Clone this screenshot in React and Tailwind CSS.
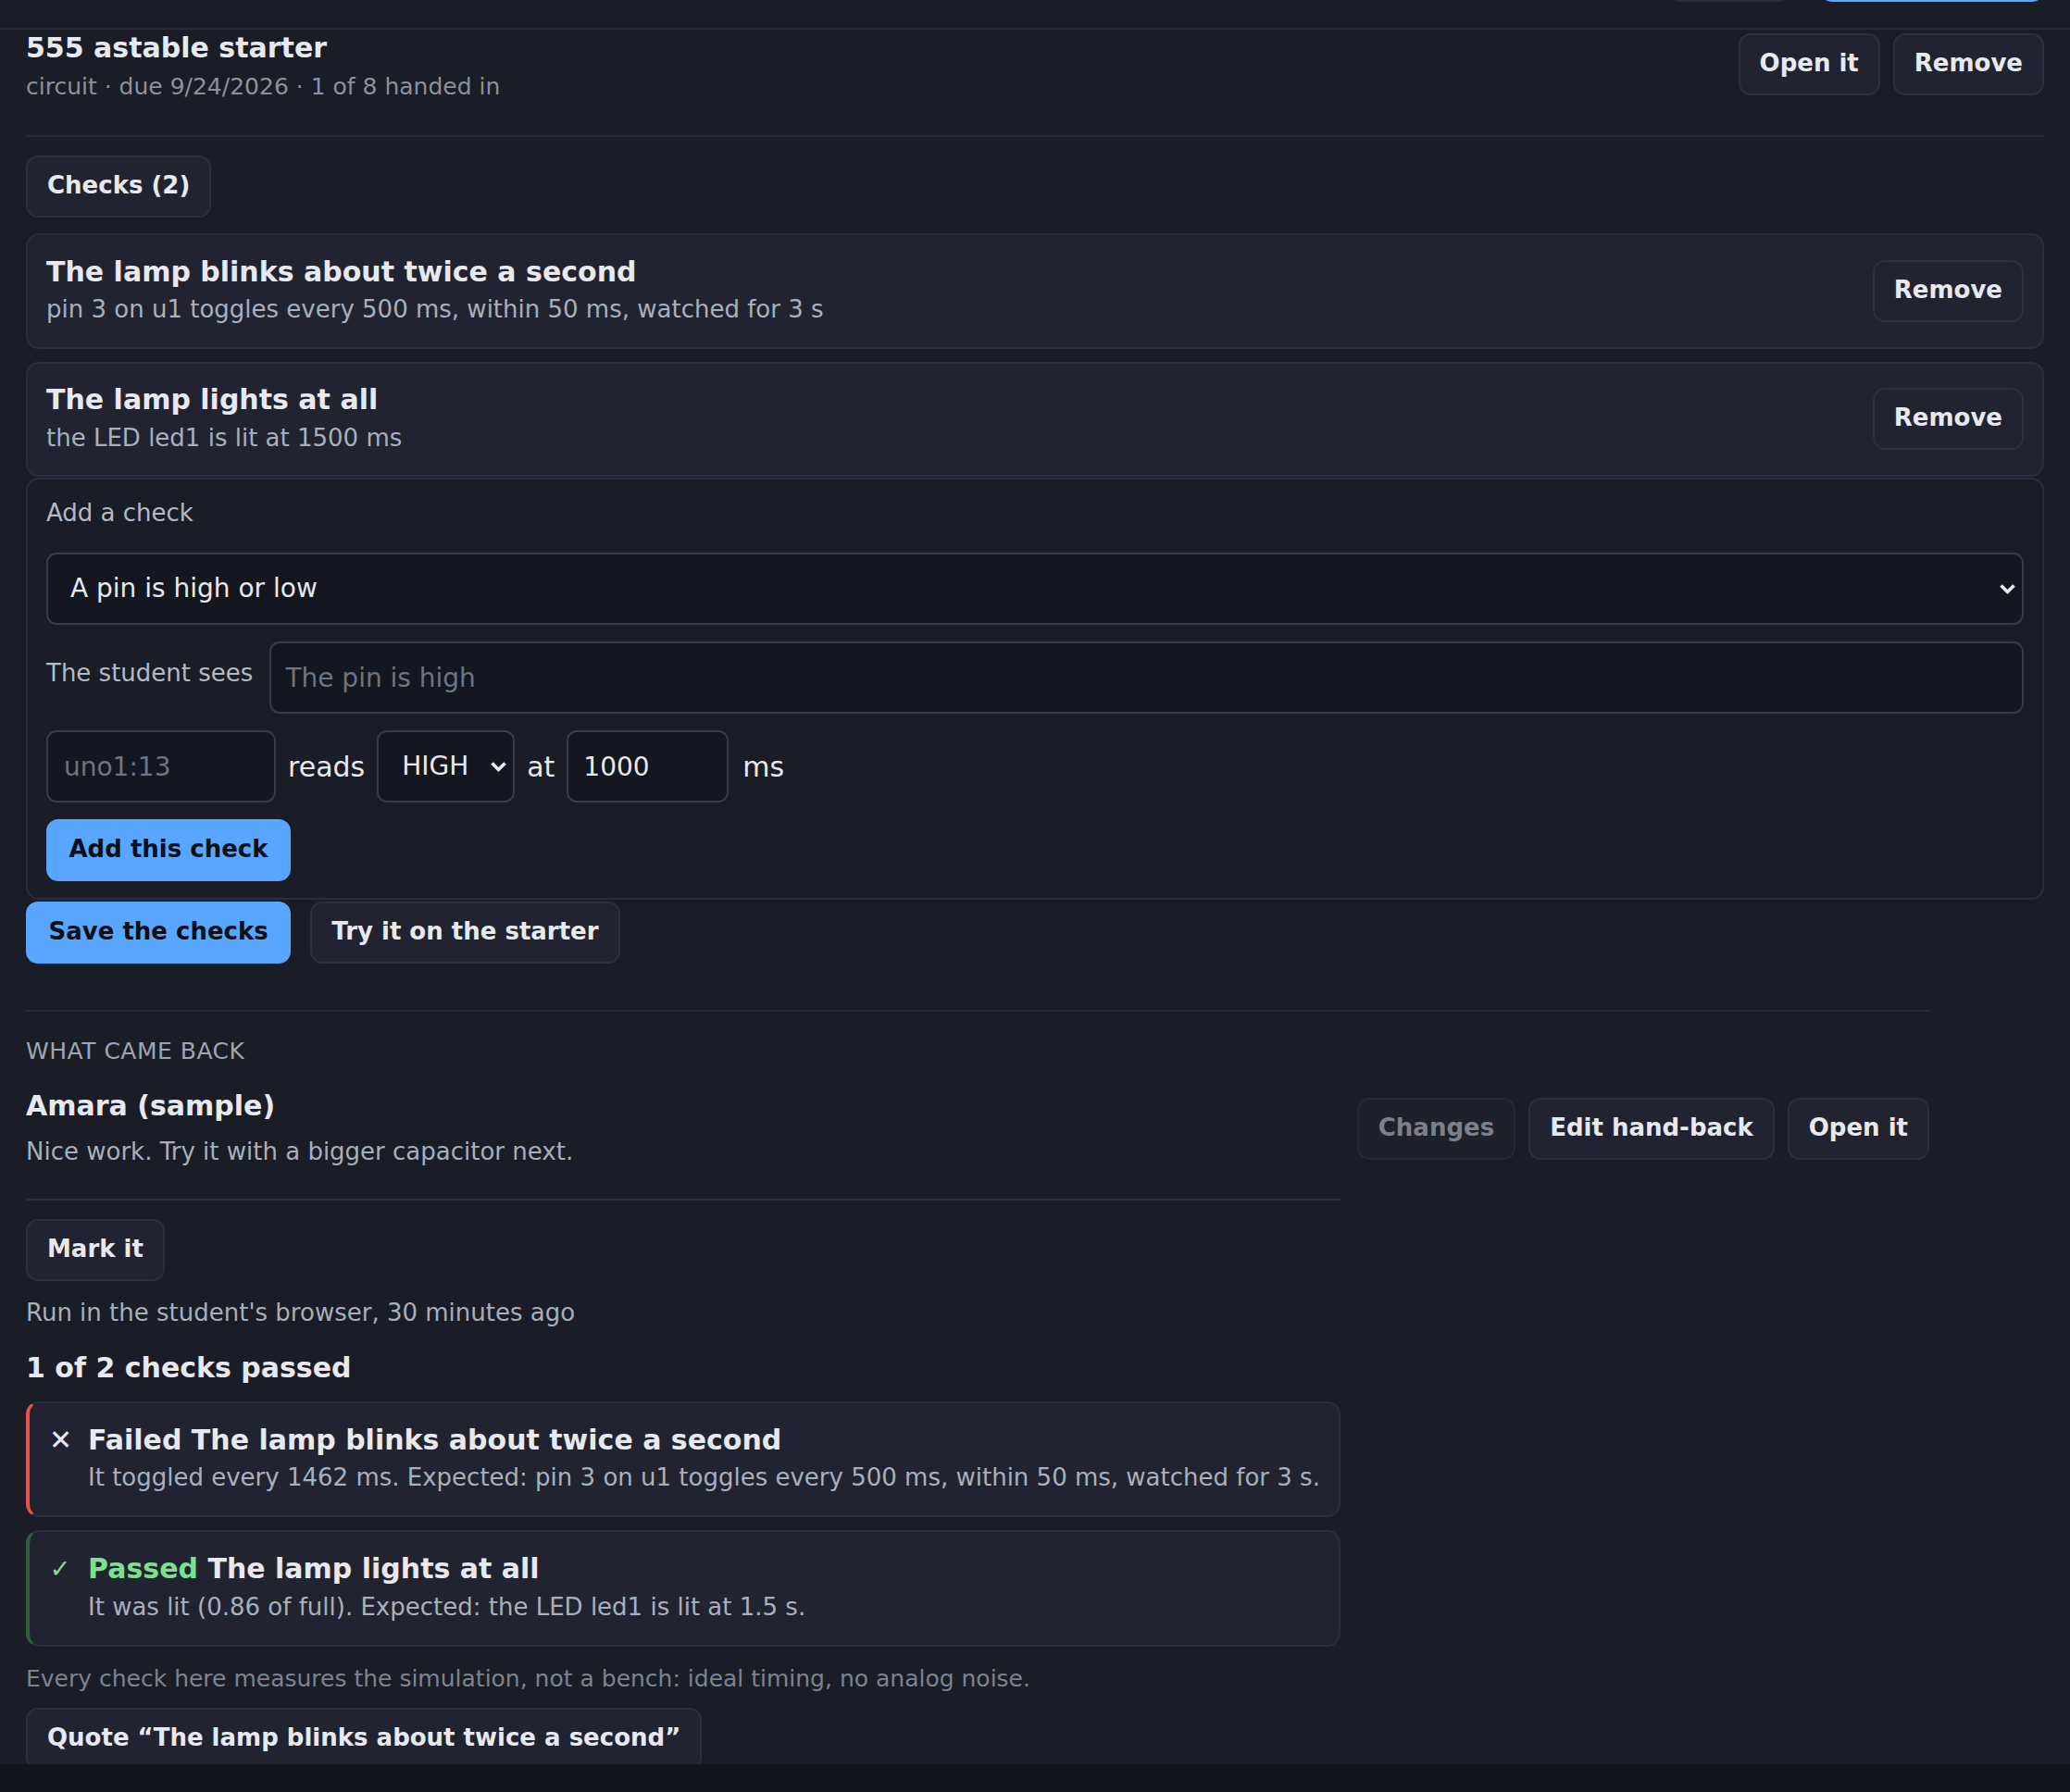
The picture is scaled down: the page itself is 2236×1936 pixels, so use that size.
import React from 'react';

const checks = [
  {
    title: 'The lamp blinks about twice a second',
    detail: 'pin 3 on u1 toggles every 500 ms, within 50 ms, watched for 3 s',
  },
  {
    title: 'The lamp lights at all',
    detail: 'the LED led1 is lit at 1500 ms',
  },
];

const results = [
  {
    passed: false,
    title: 'The lamp blinks about twice a second',
    detail:
      'It toggled every 1462 ms. Expected: pin 3 on u1 toggles every 500 ms, within 50 ms, watched for 3 s.',
  },
  {
    passed: true,
    title: 'The lamp lights at all',
    detail: 'It was lit (0.86 of full). Expected: the LED led1 is lit at 1.5 s.',
  },
];

function Button({ children, kind = 'plain' }) {
  if (kind === 'primary') {
    return (
      <button className="h-[67px] shrink-0 rounded-[13px] border-2 border-[#58a6ff] bg-[#58a6ff] px-[22.5px] pb-[3px] text-[26px] font-bold leading-none whitespace-nowrap text-[#0d1117]">
        {children}
      </button>
    );
  }
  if (kind === 'muted') {
    return (
      <button className="h-[67px] shrink-0 rounded-[13px] border-2 border-[#252934] bg-[#1e2129] px-[21px] pb-[3px] text-[26px] font-bold leading-none whitespace-nowrap text-[#7b808a]">
        {children}
      </button>
    );
  }
  return (
    <button className="h-[67px] shrink-0 rounded-[13px] border-2 border-[#2b2f3e] bg-[#212430] px-[21px] pb-[3px] text-[26px] font-bold leading-none whitespace-nowrap text-[#e7e9ee]">
      {children}
    </button>
  );
}

function Chevron() {
  return (
    <svg
      viewBox="0 0 19 13"
      className="pointer-events-none absolute top-1/2 right-[8px] h-[13px] w-[19px] -translate-y-1/2"
    >
      <polyline points="2.5,3 9.5,10 16.5,3" fill="none" stroke="#e7e9ee" strokeWidth="3.6" />
    </svg>
  );
}

function CheckCard({ title, detail }) {
  return (
    <div className="flex items-center justify-between rounded-[14px] border-2 border-[#2a2e3c] bg-[#212430] px-[20px] py-[20.5px]">
      <div>
        <div className="text-[30px] leading-[37.5px] font-bold text-[#e7e9ee]">{title}</div>
        <div className="mt-[3px] text-[26px] leading-[39px] text-[#a8b0bd]">{detail}</div>
      </div>
      <Button>Remove</Button>
    </div>
  );
}

function ResultCard({ passed, title, detail }) {
  return (
    <div
      className={
        passed
          ? 'flex gap-[18px] rounded-[14px] border-2 border-l-4 border-[#2a2e3c] border-l-[#2e5e3b] bg-[#212430] py-[21px] pl-[21px] pr-[20px]'
          : 'flex gap-[18px] rounded-[14px] border-2 border-l-4 border-[#2a2e3c] border-l-[#e5534b] bg-[#212430] py-[21px] pl-[21px] pr-[20px]'
      }
    >
      <span
        className={
          passed
            ? 'w-[24px] shrink-0 text-center text-[27px] leading-[37.5px] text-[#7ee08f]'
            : 'w-[24px] shrink-0 text-center text-[30px] leading-[37.5px] text-[#e7e9ee]'
        }
      >
        {passed ? '✓' : '✕'}
      </span>
      <div>
        <div className="text-[30px] leading-[37.5px] font-bold text-[#e7e9ee]">
          {passed ? <span className="text-[#7ee08f]">Passed</span> : <span>Failed</span>} {title}
        </div>
        <div className="mt-[3px] text-[26px] leading-[39px] text-[#a8b0bd]">{detail}</div>
      </div>
    </div>
  );
}

function AddCheck() {
  return (
    <div className="mt-[1px] flex flex-col gap-[18px] rounded-[14px] border-2 border-[#2a2e3c] px-[20px] pt-[17px] pb-[18px]">
      <div className="mb-[5px] text-[26px] leading-[39px] text-[#b4bac5]">Add a check</div>

      <div className="relative">
        <select
          defaultValue="pin"
          className="h-[78px] w-full appearance-none rounded-[11px] border-2 border-[#363c4c] bg-[#141720] pl-[24px] text-[28px] text-[#e7e9ee] outline-none"
        >
          <option value="pin">A pin is high or low</option>
          <option value="toggle">A pin toggles</option>
          <option value="led">An LED is lit</option>
        </select>
        <Chevron />
      </div>

      <div className="flex items-start gap-[18px]">
        <label className="mt-[15px] shrink-0 text-[26px] leading-[39px] text-[#b4bac5]">The student sees</label>
        <input
          placeholder="The pin is high"
          className="h-[78px] min-w-0 flex-1 rounded-[11px] border-2 border-[#363c4c] bg-[#141720] px-[15px] text-[28px] text-[#e7e9ee] outline-none placeholder:text-[#6e7480]"
        />
      </div>

      <div className="flex items-center gap-[13px] text-[30px] text-[#e7e9ee]">
        <input
          placeholder="uno1:13"
          className="h-[78px] w-[248px] rounded-[11px] border-2 border-[#363c4c] bg-[#141720] px-[17px] text-[28px] text-[#e7e9ee] outline-none placeholder:text-[#6e7480]"
        />
        <span>reads</span>
        <div className="relative">
          <select
            defaultValue="HIGH"
            className="h-[78px] w-[149px] appearance-none rounded-[11px] border-2 border-[#363c4c] bg-[#141720] pl-[25px] text-[28px] text-[#e7e9ee] outline-none"
          >
            <option>HIGH</option>
            <option>LOW</option>
          </select>
          <Chevron />
        </div>
        <span>at</span>
        <input
          defaultValue="1000"
          className="h-[78px] w-[175px] rounded-[11px] border-2 border-[#363c4c] bg-[#141720] px-[16px] text-[28px] text-[#e7e9ee] outline-none"
        />
        <span className="ml-[2px]">ms</span>
      </div>

      <div>
        <Button kind="primary">Add this check</Button>
      </div>
    </div>
  );
}

export default function App() {
  return (
    <div className="flex h-[1936px] flex-col bg-[#12151c] font-['DejaVu_Sans',sans-serif]">
      <div className="h-[1906px] shrink-0 overflow-hidden bg-[#1a1d26] text-[#e7e9ee]">
        {/* toolbar, scrolled almost out of view */}
        <div className="flex h-[32px] items-end justify-end gap-[33px] overflow-hidden border-b-2 border-[#282c39] pr-[28px] pb-[28px]">
          <div className="h-[67px] w-[131px] shrink-0 rounded-[13px] border-2 border-[#2b2f3e] bg-[#212430]" />
          <div className="h-[67px] w-[242px] shrink-0 rounded-[13px] bg-[#58a6ff]" />
        </div>

        <main className="px-[28px]">
          <div className="flex items-start justify-between border-b-2 border-[#282c39] pt-px pb-[34px]">
            <div>
              <h1 className="text-[30px] leading-[37.5px] font-bold">555 astable starter</h1>
              <div className="mt-[4px] text-[25px] leading-[37.5px] text-[#8b919d]">
                circuit · due 9/24/2026 · 1 of 8 handed in
              </div>
            </div>
            <div className="mt-[3px] flex gap-[14px]">
              <Button>Open it</Button>
              <Button>Remove</Button>
            </div>
          </div>

          <div className="mt-[20px]">
            <Button>Checks (2)</Button>
          </div>

          <div className="mt-[17px] flex flex-col gap-[14px]">
            {checks.map((c) => (
              <CheckCard key={c.title} {...c} />
            ))}
          </div>

          <AddCheck />

          <div className="mt-[2px] flex gap-[21px]">
            <Button kind="primary">Save the checks</Button>
            <Button>Try it on the starter</Button>
          </div>

          <section className="mt-[50px] max-w-[2056px] border-t-2 border-[#282c39] pt-[24px]">
            <div className="text-[25px] leading-[37.5px] tracking-[0.02em] text-[#a0a6b1]">WHAT CAME BACK</div>

            <div className="mt-[21px] flex items-center gap-[16px]">
              <div className="flex-1">
                <div className="text-[30px] leading-[37.5px] font-bold">Amara (sample)</div>
                <div className="mt-[12px] text-[26px] leading-[39px] text-[#a8afba]">
                  Nice work. Try it with a bigger capacitor next.
                </div>
              </div>
              <div className="flex gap-[14px]">
                <Button kind="muted">Changes</Button>
                <Button>Edit hand-back</Button>
                <Button>Open it</Button>
              </div>
            </div>

            <div className="mt-[31px] w-[1420px] border-t-2 border-[#282c39] pt-[20px]">
              <Button>Mark it</Button>
              <div className="mt-[15px] text-[26px] leading-[39px] text-[#a8afba]">
                Run in the student's browser, 30 minutes ago
              </div>
              <div className="mt-[21px] text-[30px] leading-[37.5px] font-bold">1 of 2 checks passed</div>

              <div className="mt-[17px] flex flex-col gap-[14px]">
                {results.map((r) => (
                  <ResultCard key={r.title} {...r} />
                ))}
              </div>

              <div className="mt-[16px] text-[25px] leading-[37.5px] text-[#7d838e]">
                Every check here measures the simulation, not a bench: ideal timing, no analog noise.
              </div>
              <div className="mt-[13px]">
                <Button>Quote “The lamp blinks about twice a second”</Button>
              </div>
            </div>
          </section>
        </main>
      </div>
    </div>
  );
}
